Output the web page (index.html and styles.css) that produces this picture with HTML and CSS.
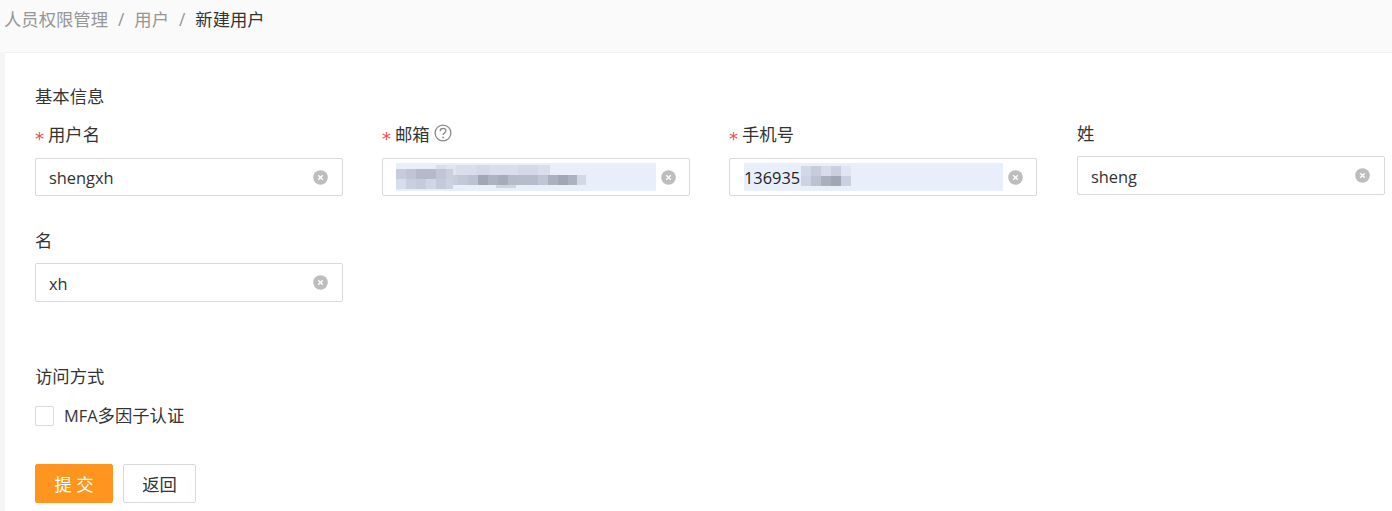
FILE: index.html
```html
<!DOCTYPE html>
<html lang="zh-CN">
<head>
	<meta charset="utf-8">
	<title>新建用户</title>
	<link rel="stylesheet" href="styles.css">
</head>
<body>
<!-- 面包屑 -->
<div class="crumbs">
	<span class="crumb">人员权限管理</span>
	<span class="crumb-sep">/</span>
	<span class="crumb">用户</span>
	<span class="crumb-sep">/</span>
	<span class="crumb crumb-now">新建用户</span>
</div>
<div class="card">
	<div class="section-title">基本信息</div>
	<div class="fields">
		<div class="field field-req">
			<label class="field-label"><span class="star">*</span>用户名</label>
			<div class="input">
				<span class="input-text">shengxh</span>
				<svg class="clear" viewBox="0 0 15 15"><circle cx="7.5" cy="7.5" r="7.3" fill="#bdbdbd"/><path d="M5.2 5.2l4.6 4.6M9.8 5.2l-4.6 4.6" stroke="#fff" stroke-width="1.3"/></svg>
			</div>
		</div>
		<div class="field field-req">
			<label class="field-label"><span class="star">*</span>邮箱
				<svg class="help" viewBox="0 0 18 18"><circle cx="9" cy="9" r="7.9" fill="none" stroke="#888888" stroke-width="1.3"/><path d="M6.2 7.2c0-1.7 1.2-2.8 2.9-2.8s2.8 1 2.8 2.4c0 2.1-2.8 2-2.8 4.3" fill="none" stroke="#888888" stroke-width="1.3"/><circle cx="9.1" cy="13.4" r=".9" fill="#888888"/></svg>
			</label>
			<div class="input input-filled">
				<!-- 打码的邮箱 -->
				<svg class="mosaic mosaic-mail" viewBox="0 0 260 28">
					<rect width="260" height="28" fill="#e8effb"/>
					<g fill="#d8deeb"><rect x="40" y="2" width="10" height="10"/><rect x="50" y="2" width="10" height="10" fill="#dfe4ef"/><rect x="60" y="2" width="20" height="10"/><rect x="80" y="2" width="14" height="10" fill="#d3d9e6"/><rect x="94" y="2" width="60" height="10"/><rect x="122" y="2" width="20" height="10" fill="#d3d9e6"/></g>
					<g><rect x="0" y="6" width="10" height="10" fill="#c6ccdb"/><rect x="10" y="6" width="10" height="10" fill="#bfc5d4"/><rect x="20" y="6" width="20" height="10" fill="#b4bac9"/><rect x="40" y="6" width="10" height="10" fill="#c0c6d5"/><rect x="50" y="6" width="7" height="10" fill="#c9cfdd"/></g>
					<g><rect x="0" y="16" width="10" height="10" fill="#d6ddec"/><rect x="10" y="16" width="10" height="10" fill="#c9cfe0"/><rect x="20" y="16" width="10" height="10" fill="#c5cbdb"/><rect x="30" y="16" width="10" height="10" fill="#d0d6e5"/><rect x="40" y="16" width="10" height="10" fill="#c4cad9"/><rect x="50" y="16" width="7" height="10" fill="#ccd2e1"/></g>
					<g><rect x="57" y="12" width="5" height="10" fill="#c8ced9"/><rect x="62" y="12" width="10" height="10" fill="#c2c8d5"/><rect x="72" y="12" width="10" height="10" fill="#bcc2cf"/><rect x="82" y="12" width="10" height="10" fill="#a1a7b3"/><rect x="92" y="12" width="10" height="10" fill="#adb3bf"/><rect x="102" y="12" width="10" height="10" fill="#a6acb8"/><rect x="112" y="12" width="10" height="10" fill="#b5bbc7"/><rect x="122" y="12" width="20" height="10" fill="#b6bcc9"/><rect x="142" y="12" width="10" height="10" fill="#c0c6d3"/><rect x="152" y="12" width="10" height="10" fill="#abb1bd"/><rect x="162" y="12" width="10" height="10" fill="#a1a7b3"/><rect x="172" y="12" width="10" height="10" fill="#acb2be"/><rect x="181" y="12" width="9" height="10" fill="#d2d8e5"/></g>
					<rect x="100" y="22" width="20" height="3" fill="#ced4e2"/>
				</svg>
				<svg class="clear" viewBox="0 0 15 15"><circle cx="7.5" cy="7.5" r="7.3" fill="#bdbdbd"/><path d="M5.2 5.2l4.6 4.6M9.8 5.2l-4.6 4.6" stroke="#fff" stroke-width="1.3"/></svg>
			</div>
		</div>
		<div class="field field-req">
			<label class="field-label"><span class="star">*</span>手机号</label>
			<div class="input input-filled">
				<div class="phone">
					<span class="phone-num">136935</span>
					<svg class="mosaic-phone" viewBox="0 0 50 20">
						<rect x="0" y="0" width="10" height="10" fill="#d2d8e6"/><rect x="10" y="0" width="10" height="10" fill="#c6ccdb"/><rect x="20" y="0" width="10" height="10" fill="#d6dcea"/><rect x="30" y="0" width="10" height="10" fill="#c9cfde"/><rect x="40" y="0" width="10" height="10" fill="#dfe5f2"/>
						<rect x="0" y="10" width="10" height="10" fill="#cdd3e2"/><rect x="10" y="10" width="10" height="10" fill="#bcc2d0"/><rect x="20" y="10" width="10" height="10" fill="#aab0bc"/><rect x="30" y="10" width="10" height="10" fill="#a0a6b2"/><rect x="40" y="10" width="10" height="10" fill="#cad0df"/>
					</svg>
				</div>
				<svg class="clear" viewBox="0 0 15 15"><circle cx="7.5" cy="7.5" r="7.3" fill="#bdbdbd"/><path d="M5.2 5.2l4.6 4.6M9.8 5.2l-4.6 4.6" stroke="#fff" stroke-width="1.3"/></svg>
			</div>
		</div>
		<div class="field">
			<label class="field-label">姓</label>
			<div class="input">
				<span class="input-text">sheng</span>
				<svg class="clear" viewBox="0 0 15 15"><circle cx="7.5" cy="7.5" r="7.3" fill="#bdbdbd"/><path d="M5.2 5.2l4.6 4.6M9.8 5.2l-4.6 4.6" stroke="#fff" stroke-width="1.3"/></svg>
			</div>
		</div>
		<div class="field">
			<label class="field-label">名</label>
			<div class="input">
				<span class="input-text">xh</span>
				<svg class="clear" viewBox="0 0 15 15"><circle cx="7.5" cy="7.5" r="7.3" fill="#bdbdbd"/><path d="M5.2 5.2l4.6 4.6M9.8 5.2l-4.6 4.6" stroke="#fff" stroke-width="1.3"/></svg>
			</div>
		</div>
	</div>
	<div class="section-title section-access">访问方式</div>
	<label class="check">
		<span class="check-box"></span>
		<span class="check-text"><span class="check-latin">MFA</span>多因子认证</span>
	</label>
	<div class="actions">
		<button class="btn btn-primary">提 交</button>
		<button class="btn">返回</button>
	</div>
</div>
</body>
</html>
```

FILE: styles.css
```css
html, body {
	margin: 0;
	height: 511px;
	overflow: hidden;
}
body {
	background-color: #f5f5f5;
	font-family: "Open Sans", "Noto Sans CJK SC", sans-serif;
	font-size: 17.33px;
	color: #333333;
}
/* 面包屑 */
.crumbs {
	height: 52px;
	box-sizing: border-box;
	padding: 7px 0 0 4px;
	line-height: 24px;
	background-color: #fafafa;
	display: flex;
	color: #969696;
}
.crumb-sep {
	margin: 0 10px;
}
.crumb-now {
	color: #333333;
}
/* 内容卡片 */
.card {
	margin-left: 5px;
	height: 459px;
	box-sizing: border-box;
	padding: 31px 0 0 30px;
	background-color: #ffffff;
	border-top: 1px solid #f0f0f0;
}
.section-title {
	line-height: 24px;
}
.fields {
	display: flex;
	flex-wrap: wrap;
	column-gap: 39px;
	margin-top: 14px;
}
.field {
	width: 308px;
	height: 107px;
}
.field:nth-child(3) {
	margin-right: 1px;
}
.field-label {
	display: block;
	height: 34px;
	line-height: 22px;
	box-sizing: border-box;
}
.field-req .field-label {
	height: 36px;
	line-height: 24px;
}
.star {
	font-family: "DejaVu Sans", sans-serif;
	font-size: 18px;
	color: #f5484d;
	margin-right: 4px;
	vertical-align: -4px;
	line-height: 1;
}
.help {
	width: 18px;
	height: 18px;
	vertical-align: -1px;
}
.input {
	height: 39px;
	box-sizing: border-box;
	border: 1px solid #d9d9d9;
	border-radius: 2px;
	display: flex;
	align-items: center;
	justify-content: space-between;
	padding: 0 14px 0 13px;
	font-size: 16.4px;
	color: #333333;
}
.input-text {
	margin-top: 2px;
}
.field-req .input {
	height: 38px;
}
.field-req .input-text {
	margin-top: 0;
}
.input-filled {
	padding-right: 13px;
	padding-left: 13px;
}
.clear {
	width: 15px;
	height: 15px;
	flex: none;
}
.mosaic-mail {
	width: 260px;
	height: 28px;
	display: block;
}
.phone {
	width: 259px;
	height: 28px;
	margin-left: 1px;
	box-sizing: border-box;
	background-color: #e8effb;
	display: flex;
	align-items: center;
}
.phone-num {
	color: #222222;
}
.mosaic-phone {
	width: 50px;
	height: 20px;
	flex: none;
	margin: 0 0 2px 1px;
}
.section-access {
	margin-top: 28px;
}
/* 复选框 */
.check {
	display: flex;
	align-items: center;
	gap: 10px;
	margin-top: 15px;
	line-height: 24px;
}
.check-box {
	width: 17px;
	height: 18px;
	margin-bottom: 2px;
	border: 1px solid #d9d9d9;
	border-radius: 2px;
}
.check-text {
	padding-bottom: 2px;
}
.check-latin {
	font-size: 16.4px;
}
/* 按钮 */
.actions {
	display: flex;
	gap: 10px;
	margin-top: 34px;
}
.btn {
	width: 73px;
	height: 39px;
	font: inherit;
	color: #333333;
	background-color: #ffffff;
	border: 1px solid #d9d9d9;
	border-radius: 2px;
	padding: 0;
}
.btn-primary {
	width: 78px;
	color: #ffffff;
	background-color: #ff951e;
	border-color: #ff951e;
}
```
